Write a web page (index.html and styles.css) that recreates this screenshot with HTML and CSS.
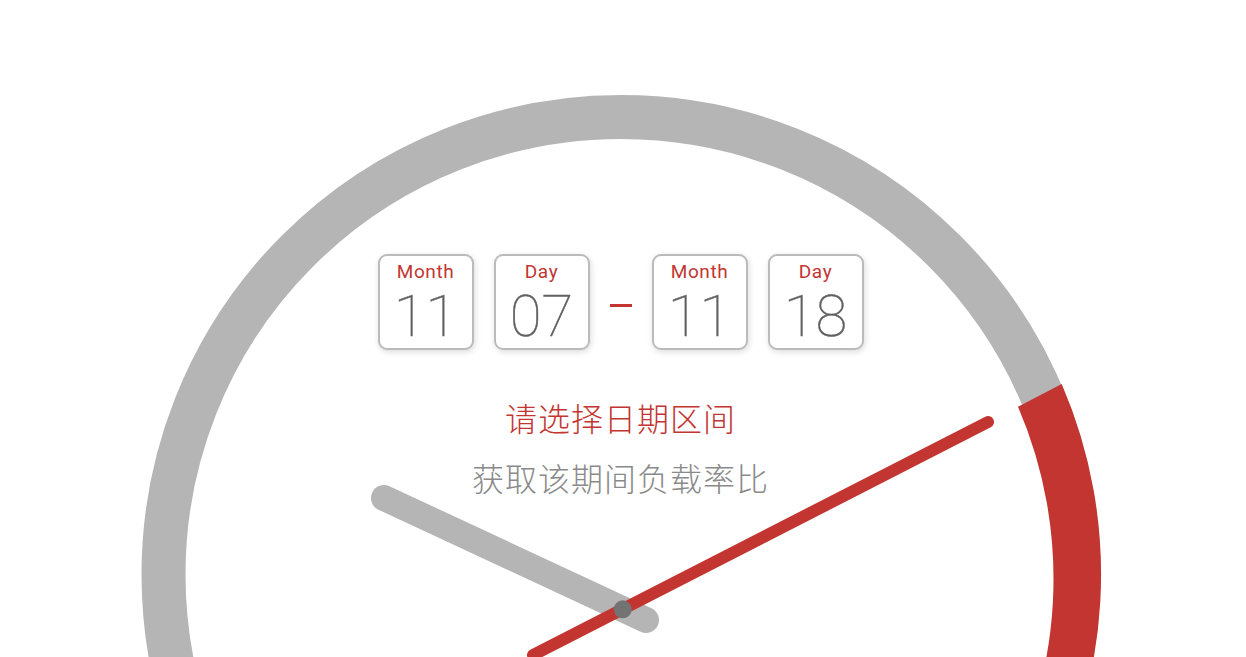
FILE: index.html
```html
<!DOCTYPE html>
<html lang="zh-CN">
<head>
<meta charset="utf-8">
<title>负载率</title>
<link rel="stylesheet" href="styles.css">
</head>
<body>
<div class="stage">
  <svg class="clock" width="1246" height="657" viewBox="0 0 1246 657" aria-hidden="true">
    <circle cx="621" cy="574.5" r="457.5" fill="none" stroke="#b5b5b5" stroke-width="44"/>
    <path d="M1061.7 384 A480 480 0 0 1 1036.7 814.5 L997.7 792 A435 435 0 0 0 1018 406.7 Z" fill="#c23531"/>
    <line x1="384" y1="498" x2="646" y2="620" stroke="#b5b5b5" stroke-width="26" stroke-linecap="round"/>
    <line x1="988" y1="422" x2="533" y2="655" stroke="#c23531" stroke-width="12" stroke-linecap="round"/>
    <circle cx="622.7" cy="609.3" r="9" fill="#737373"/>
  </svg>
  <div class="panel">
    <div class="dates">
      <div class="date-box"><span class="date-label">Month</span><span class="date-value">11</span></div>
      <div class="date-box"><span class="date-label">Day</span><span class="date-value">07</span></div>
      <span class="dash"></span>
      <div class="date-box"><span class="date-label">Month</span><span class="date-value">11</span></div>
      <div class="date-box"><span class="date-label">Day</span><span class="date-value">18</span></div>
    </div>
    <p class="title">请选择日期区间</p>
    <p class="subtitle">获取该期间负载率比</p>
  </div>
</div>
</body>
</html>
```

FILE: styles.css
```css
html, body {
  margin: 0;
  padding: 0;
  background: #ffffff;
}

.stage {
  position: relative;
  width: 100%;
  height: 657px;
  overflow: hidden;
  font-family: "Roboto", "Noto Sans CJK SC", sans-serif;
}

.clock {
  position: absolute;
  left: 0;
  top: 0;
}

.panel {
  position: relative;
  display: flex;
  flex-direction: column;
  align-items: center;
  padding-top: 254px;
  padding-right: 5px;
}

.dates {
  display: flex;
  align-items: center;
  gap: 20px;
}

.date-box {
  box-sizing: border-box;
  width: 96px;
  height: 96px;
  border: 2px solid #bbbbbb;
  border-radius: 9px;
  background: #ffffff;
  box-shadow: 1px 2px 6px rgba(0, 0, 0, 0.14);
  display: flex;
  flex-direction: column;
  align-items: center;
}

.date-label {
  margin-top: 6px;
  font-size: 19px;
  line-height: 19px;
  letter-spacing: 0.6px;
  color: #c23531;
  font-weight: 400;
}

.date-value {
  font-size: 58px;
  line-height: 48px;
  font-weight: 100;
  color: #606060;
  -webkit-text-stroke: 0.4px #606060;
  margin-top: 11px;
}

.dash {
  width: 22px;
  height: 3px;
  background: #c23531;
  margin-top: 6px;
}

.title,
.subtitle {
  margin: 0;
  font-family: "Noto Sans CJK SC", sans-serif;
  font-size: 32px;
  line-height: 40px;
  font-weight: 300;
  letter-spacing: 1px;
}

.title {
  margin-top: 47px;
  color: #c23531;
}

.subtitle {
  margin-top: 20px;
  color: #8a8a8a;
}
```
